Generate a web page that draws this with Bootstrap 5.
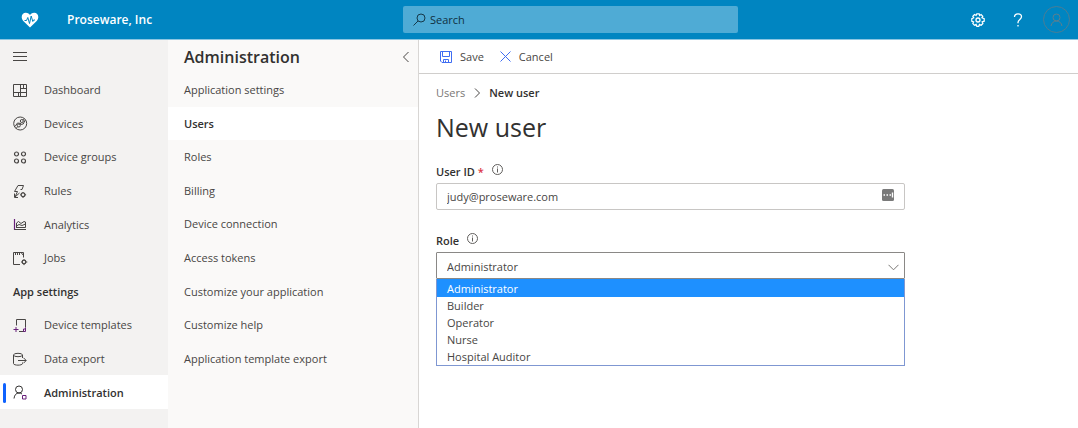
<!DOCTYPE html>
<html lang="en">
<head>
<meta charset="utf-8">
<meta name="viewport" content="width=device-width, initial-scale=1">
<title>New user - Proseware, Inc</title>
<link href="https://cdn.jsdelivr.net/npm/bootstrap@5.3.0/dist/css/bootstrap.min.css" rel="stylesheet">
<style>
  body { font: 11px/16px "Open Sans", "Noto Sans", sans-serif; color: #484644; background: #fff; }
  svg { fill: none; stroke: currentColor; stroke-width: 1; flex: none; display: block; }
  a { color: inherit; text-decoration: none; }
  button { border: 0; background: none; padding: 0; color: inherit; }
  .fw-semibold { color: #323130; }

  .topbar { height: 40px; background: #0085c1; border-bottom: 1px solid #8cc6e2; color: #fff; }
  .brand-area { width: 403px; padding-left: 21px; }
  .brand-area strong { font-size: 12px; font-weight: 600; }
  .search { width: 335px; height: 27px; background: #4fabd5; border-radius: 2px; padding: 0 10px; color: #16394a; }
  .search input { border: 0; outline: 0; background: none; padding: 0; min-width: 0; color: inherit; }
  .search input::placeholder { color: #10303f; opacity: 1; }
  .account { width: 27px; height: 27px; border: 1px solid #4c7d94; border-radius: 50%; color: #5d7f8e; }

  .side-main { width: 168px; background: #f3f2f1; }
  .side-sub { width: 251px; background: #faf9f8; border-right: 1px solid #d8d6d4; }
  .side-head { height: 33px; }
  .side-sub h2 { padding-top: 2px; }
  .rows { display: grid; grid-auto-rows: 1fr; }
  .rows-main { height: 336px; }
  .rows-sub { height: 302px; }
  .rows-main > * { display: flex; align-items: center; gap: 16px; padding: 1px 0 0 13px; }
  .rows-sub > * { display: flex; align-items: center; padding: 1px 0 0 16px; }
  .rows .current { background: #fff; font-weight: 600; color: #323130; }
  .rows-main .current { padding-left: 3px; gap: 7px; }
  .rows-main .current::before { content: ""; width: 3px; height: 20px; border-radius: 2px; background: #0f62fe; }
  .rows-main .current svg { margin-right: 9px; }

  .commands { height: 34px; border-bottom: 1px solid #d0cecc; padding-left: 21px; }
  .commands svg { color: #3f6df2; }
  .content-pad { padding: 11px 17px; }
  .crumb-link { color: #797775; }
  .page-title { font-size: 25px; line-height: 34px; font-weight: 400; color: #323130; margin: 9px 0 18px; }
  .form-area { width: 469px; max-width: 100%; }
  .label-row { height: 20px; margin-bottom: 1px; }
  .label-row svg { margin-bottom: 6px; color: #605e5c; }
  .field { height: 27px; font-size: 11px; line-height: 16px; padding: 0 10px; color: #484644; border: 1px solid #c8c6c4; border-radius: 2px; background: #fff; }
  .field.open { appearance: none; padding-top: 2px; border-color: #8a8886; border-radius: 1px; }
  .tail { position: absolute; right: 11px; top: 6px; pointer-events: none; }
  .tail-caret { position: absolute; right: 6px; top: 12px; color: #797775; pointer-events: none; }
  .role-field { margin-top: 21px; }
  .options { position: absolute; top: 100%; left: 0; right: 0; border: 1px solid #7f97d2; border-top: 0; background: #fff; }
  .options li { height: 17px; line-height: 17px; padding-left: 10px; }
  .options li.picked { height: 18px; line-height: 19px; background: #1e90ff; color: #fff; }
</style>
</head>
<body class="d-flex flex-column min-vh-100">
<header class="topbar d-flex align-items-center">
  <div class="brand-area d-flex align-items-center">
    <svg width="18" height="16" viewBox="0 0 18 16" aria-hidden="true"><path d="M9 15.500 2.300 9C-.8 5 1 .8 4.800 .8 7 .8 8.300 2 9 3 9.700 2 11 .8 13.200 .8 17 .8 18.800 5 15.700 9Z" fill="#fff" stroke="none"/><path d="M3.500 8.500H5.500L6.800 5.500 8.500 11.500 10.200 4 11.800 9.500 12.500 8H14" stroke="#0085c1" stroke-width="1"/></svg>
    <strong class="ms-4 ps-1">Proseware, Inc</strong>
  </div>
  <label class="search d-flex align-items-center gap-1">
    <svg width="13" height="13" viewBox="0 0 13 13" aria-hidden="true"><circle cx="8" cy="5" r="4"/><path d="M5 8 .5 12.500"/></svg>
    <input class="flex-grow-1" type="search" placeholder="Search" aria-label="Search">
  </label>
  <div class="d-flex align-items-center ms-auto pe-2">
    <button type="button" aria-label="Settings"><svg width="14" height="14" viewBox="0 0 14 14"><path stroke-width="1.200" d="M5.800 .8h2.400l.4 1.700 1.500-.9 1.700 1.700-.9 1.500 2.300.8v2.600l-2.100.6.8 1.700-1.700 1.700-1.700-.8-.7 1.900H5.800l-.7-1.900-1.700.8-1.600-1.700.8-1.700-1.800-.6V5.600l1.900-.8-.9-1.500 1.700-1.700 1.600.9Z"/><circle cx="7" cy="7" r="2" stroke-width="1.300"/></svg></button>
    <button type="button" class="ms-4 me-3 px-1" aria-label="Help"><svg width="10" height="14" viewBox="0 0 10 14"><path stroke-width="1.300" d="M1.500 4C1.500 1.800 3 .8 5 .8s3.500 1 3.500 3C8.500 6.500 5 6.500 5 9.500v.7M5 12v1.500"/></svg></button>
    <button type="button" class="account d-flex align-items-center justify-content-center" aria-label="Account"><svg width="13" height="14" viewBox="0 0 13 14"><circle cx="6.500" cy="4.500" r="3.500"/><path d="M1 13c.5-3 2.500-5 5.500-5s5 2 5.500 5"/></svg></button>
  </div>
</header>

<div class="d-flex flex-grow-1">
  <aside class="side-main flex-shrink-0">
    <div class="side-head d-flex align-items-center ps-2"><button type="button" class="ms-1" aria-label="Menu"><svg width="16" height="9" viewBox="0 0 16 9"><path d="M1 .5h14M1 4.500h14M1 8.500h14"/></svg></button></div>
    <nav class="rows rows-main" aria-label="Main">
      <a href="#"><svg width="15" height="15" viewBox="0 0 15 15"><path d="M.5 1.500h13v12H.5ZM7.500 1.500v12M.5 9.500h13M7.500 5.500h6M10.500 1.500v4M5.500 9.500v4"/></svg>Dashboard</a>
      <a href="#"><svg width="15" height="15" viewBox="0 0 15 15"><circle cx="7.200" cy="7.500" r="6.500"/><circle cx="8.800" cy="5" r="1.500"/><circle cx="5.800" cy="9.500" r="1.500"/><path d="M2 10.500 4.500 7l3.500.5M12.200 4 10.200 8l-3 .5M3 12.500 4.800 10.500M11.200 2.500 9.800 4"/></svg>Devices</a>
      <a href="#"><svg width="15" height="15" viewBox="0 0 15 15"><g stroke-width="1.200"><circle cx="3.500" cy="4" r="2"/><circle cx="10.500" cy="4" r="2"/><circle cx="3.500" cy="11" r="2"/><circle cx="10.500" cy="11" r="2"/></g></svg>Device groups</a>
      <a href="#"><svg width="15" height="15" viewBox="0 0 15 15"><path d="M7.500 5.500H9L10.500 1.500H5L1.500 7.500H4.500L2 13 6.500 9M1.500 9.500V13.500H5"/><circle cx="10" cy="10.800" r="1.900" stroke-width="1.200"/><path d="M10 8v1M10 12.600v1.400M7.300 10.800h1M11.900 10.800h1.200"/></svg>Rules</a>
      <a href="#"><svg width="15" height="15" viewBox="0 0 15 15"><path d="M1.500 2v11" stroke="#68217a" stroke-width="1.200"/><path d="M1.500 12.500H13M3.500 11V6L5.500 4.500 8 6.500 11 4.500 12.500 5v5.500h-9ZM3.500 9 6 7.500 9 8.500 12.500 7"/></svg>Analytics</a>
      <a href="#"><svg width="15" height="15" viewBox="0 0 15 15"><path d="M7 13.500H.5V1.500H10.500V6.500M10.500 4.500 8 1.500M2.500 1v3M4.500 1v3M6.500 1v3"/><circle cx="11" cy="11" r="1.800" stroke-width="1.300"/><path d="M11 8.200v1M11 12.800v1.300M8.200 11h1M12.800 11h1.500"/></svg>Jobs</a>
      <div class="fw-semibold">App settings</div>
      <a href="#"><svg width="15" height="15" viewBox="0 0 15 15"><path d="M3.500 7.500v-6h9v8M6 13.500h5"/><path d="M3 9v5M.5 11.500h5" stroke="#68217a"/><path d="M12.500 9.500v4H10.500v-2.500h2" stroke="#68217a"/></svg>Device templates</a>
      <a href="#"><svg width="15" height="15" viewBox="0 0 15 15"><ellipse cx="5" cy="3" rx="4.500" ry="1.700"/><path d="M.5 3v8.500c0 2.200 9 2.200 9 0V10.500M9.500 3v3M5 8.500h8M10.500 5.800l2.700 2.700-2.700 2.700"/></svg>Data export</a>
      <a href="#" class="current" aria-current="page"><svg width="15" height="15" viewBox="0 0 15 15"><circle cx="6" cy="4.500" r="3.500"/><path d="M1 13.500C1.500 10 3 8 6 8c1.200 0 2.200.4 3 1"/><path d="M9.500 10.500h3.500V14H9.500Z" stroke="#68217a"/></svg>Administration</a>
    </nav>
  </aside>

  <aside class="side-sub flex-shrink-0">
    <div class="side-head d-flex align-items-center justify-content-between ps-3 pe-2">
      <h2 class="fs-6 fw-semibold m-0">Administration</h2>
      <button type="button" aria-label="Collapse"><svg width="8" height="12" viewBox="0 0 8 12"><path d="M6.500 1 1.500 6l5 5"/></svg></button>
    </div>
    <nav class="rows rows-sub" aria-label="Administration">
      <a href="#">Application settings</a>
      <a href="#" class="current" aria-current="page">Users</a>
      <a href="#">Roles</a>
      <a href="#">Billing</a>
      <a href="#">Device connection</a>
      <a href="#">Access tokens</a>
      <a href="#">Customize your application</a>
      <a href="#">Customize help</a>
      <a href="#">Application template export</a>
    </nav>
  </aside>

  <main class="flex-grow-1">
    <div class="commands d-flex align-items-center gap-3">
      <button type="button" class="d-flex align-items-center gap-2"><svg width="12" height="12" viewBox="0 0 12 12"><path d="M.5 .5h11v11H2l-1.500-1.500ZM2.500 .5V5.500h7V.5M3.500 11.500v-3h5v3M5.500 9.500v2"/></svg>Save</button>
      <button type="button" class="d-flex align-items-center gap-2"><svg width="11" height="11" viewBox="0 0 11 11"><path d="M.5 .5 10.500 10.500M10.500 .5 .5 10.500"/></svg>Cancel</button>
    </div>
    <div class="content-pad">
      <nav class="d-flex align-items-center gap-2" aria-label="Breadcrumb">
        <a href="#" class="crumb-link">Users</a>
        <svg width="8" height="10" viewBox="0 0 8 10" aria-hidden="true"><path d="m2 .5 4.500 4.500L2 9.500"/></svg>
        <span class="fw-semibold">New user</span>
      </nav>
      <h1 class="page-title">New user</h1>
      <form class="form-area">
        <div class="label-row d-flex align-items-center gap-2">
          <label for="user-id" class="fw-semibold">User ID <span class="text-danger">*</span></label>
          <svg width="11" height="11" viewBox="0 0 11 11" aria-hidden="true"><circle cx="5.500" cy="5.500" r="5"/><path d="M5.500 4.500v4M5.500 2.500v1"/></svg>
        </div>
        <div class="position-relative">
          <input id="user-id" class="field w-100 d-block" type="text" value="judy@proseware.com">
          <svg class="tail" width="12" height="12" viewBox="0 0 12 12" aria-hidden="true"><rect width="12" height="12" rx="1.500" fill="#7a7a7a" stroke="none"/><path d="M1.500 6h1.500M4.500 6H6M7.500 6H9M10.500 3.500v5" stroke="#fff" stroke-width="1.400"/></svg>
        </div>
        <div class="role-field">
          <div class="label-row d-flex align-items-center gap-2">
            <label for="role" class="fw-semibold">Role</label>
            <svg width="11" height="11" viewBox="0 0 11 11" aria-hidden="true"><circle cx="5.500" cy="5.500" r="5"/><path d="M5.500 4.500v4M5.500 2.500v1"/></svg>
          </div>
          <div class="position-relative">
            <select id="role" class="field open w-100 d-block">
              <option selected>Administrator</option><option>Builder</option><option>Operator</option><option>Nurse</option><option>Hospital Auditor</option>
            </select>
            <svg class="tail-caret" width="11" height="7" viewBox="0 0 11 7" aria-hidden="true"><path d="m.5 .8 5 5 5-5"/></svg>
            <ul class="options list-unstyled m-0" role="listbox" aria-label="Role">
              <li class="picked" role="option" aria-selected="true">Administrator</li>
              <li role="option">Builder</li>
              <li role="option">Operator</li>
              <li role="option">Nurse</li>
              <li role="option">Hospital Auditor</li>
            </ul>
          </div>
        </div>
      </form>
    </div>
  </main>
</div>
<script src="https://cdn.jsdelivr.net/npm/bootstrap@5.3.0/dist/js/bootstrap.bundle.min.js"></script>
</body>
</html>
